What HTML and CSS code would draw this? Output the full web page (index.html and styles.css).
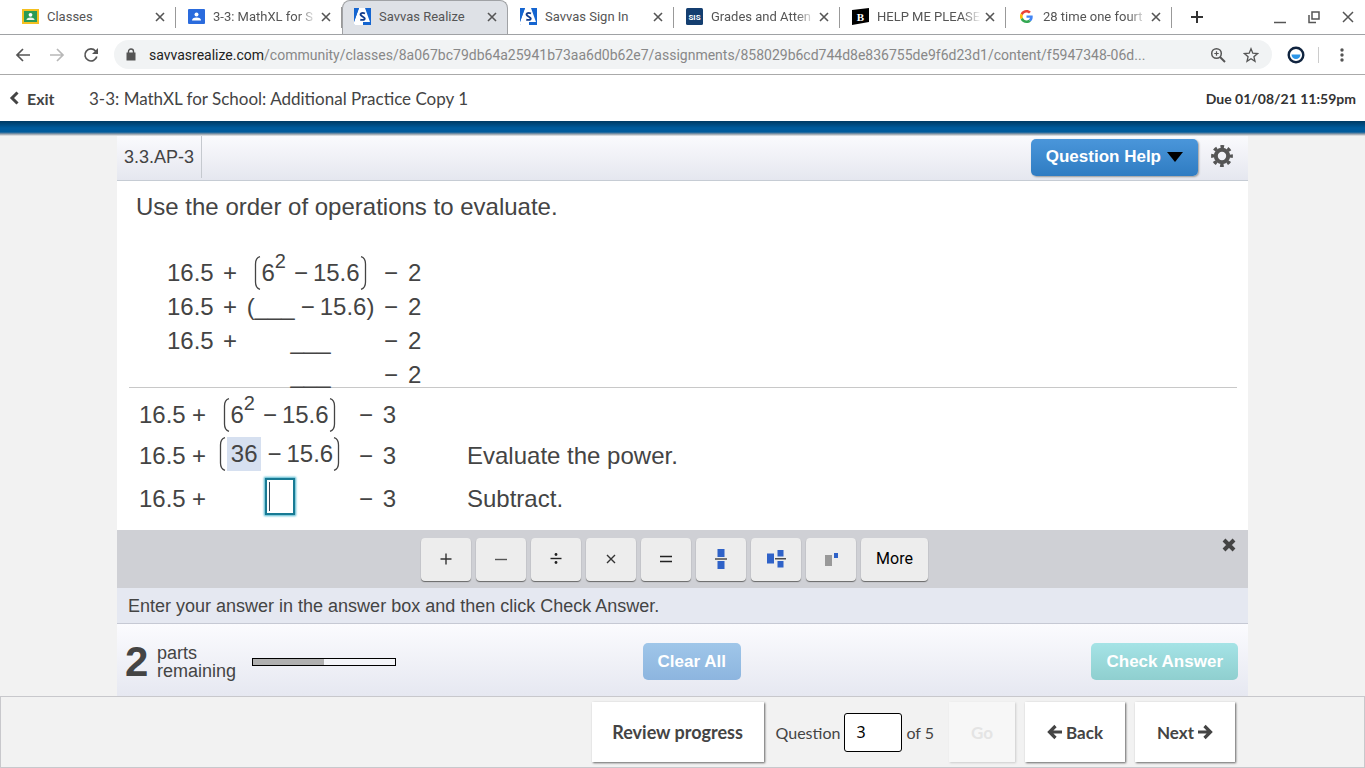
FILE: index.html
```html
<!DOCTYPE html>
<html lang="en">
<head>
<meta charset="utf-8">
<title>Savvas Realize</title>
<link rel="stylesheet" href="styles.css">
</head>
<body>
<svg class="defs" aria-hidden="true">
  <symbol id="x" viewBox="0 0 12 12"><path d="M2 2l8 8M10 2l-8 8" stroke="currentColor" stroke-width="1.6" fill="none"/></symbol>
  <symbol id="savvas" viewBox="0 0 17 17"><path d="M0 0h17v17H0z" fill="#1565d0"/><path d="M5 0h6l5 14H9v2H0v-2z" fill="#fff"/><path d="M0 14L5 0H0z" fill="#1565d0"/><path d="M0 17L5 3l1 11h3v3z" fill="#fff"/><path d="M11 5.500Q8.500 4.300 7 5.500T8.500 8.500 10.500 11.300 6.300 11.700" fill="none" stroke="#123c8c" stroke-width="1.900"/></symbol>
  <symbol id="lp" viewBox="0 0 7 34"><path d="M6 .7Q1.500 2 1.500 8v18Q1.500 32 6 33.300" stroke="currentColor" stroke-width="1.300" fill="none"/></symbol>
  <symbol id="rp" viewBox="0 0 7 34"><path d="M1 .7Q5.500 2 5.500 8v18Q5.500 32 1 33.300" stroke="currentColor" stroke-width="1.300" fill="none"/></symbol>
  <symbol id="arrow" viewBox="0 0 16 16"><path d="M15 8H4M8.500 2L2.500 8l6 6" stroke="currentColor" stroke-width="3.200" fill="none"/></symbol>
</svg>

<header class="browser">
  <div class="tabs">
    <div class="tab"><svg class="fav" viewBox="0 0 17 17"><path d="M0 1h17v15H0z" fill="#f4c020"/><path d="M2 3h13v11H2z" fill="#2b9a55"/><circle cx="8.500" cy="6.800" r="1.900" fill="#fff"/><path d="M4.500 12q0-2.500 4-2.500t4 2.500z" fill="#e8f5e9"/></svg><span class="tab-title">Classes</span><button class="tab-close" aria-label="Close tab"><svg><use href="#x"/></svg></button></div>
    <div class="tab"><svg class="fav" viewBox="0 0 17 17"><rect y="1" width="17" height="15" rx="1" fill="#2a6bdd"/><circle cx="8.500" cy="6.500" r="2" fill="#fff"/><path d="M4 12.500q0-3 4.500-3t4.500 3z" fill="#fff"/></svg><span class="tab-title fade">3-3: MathXL for S</span><button class="tab-close" aria-label="Close tab"><svg><use href="#x"/></svg></button></div>
    <div class="tab active"><svg class="fav"><use href="#savvas"/></svg><span class="tab-title">Savvas Realize</span><button class="tab-close" aria-label="Close tab"><svg><use href="#x"/></svg></button></div>
    <div class="tab"><svg class="fav"><use href="#savvas"/></svg><span class="tab-title">Savvas Sign In</span><button class="tab-close" aria-label="Close tab"><svg><use href="#x"/></svg></button></div>
    <div class="tab"><svg class="fav" viewBox="0 0 17 17"><rect width="17" height="17" rx="1.500" fill="#143e70"/><text x="8.500" y="11.500" text-anchor="middle" class="fav-sis">SIS</text></svg><span class="tab-title fade">Grades and Atten</span><button class="tab-close" aria-label="Close tab"><svg><use href="#x"/></svg></button></div>
    <div class="tab"><svg class="fav" viewBox="0 0 17 17"><path d="M0 2L17 0v14L0 17z" fill="#000"/><text x="8.500" y="12.500" text-anchor="middle" class="fav-b">B</text></svg><span class="tab-title fade">HELP ME PLEASE</span><button class="tab-close" aria-label="Close tab"><svg><use href="#x"/></svg></button></div>
    <div class="tab"><svg class="fav g" viewBox="0 0 48 48"><path fill="#EA4335" d="M24 9.500c3.540 0 6.710 1.220 9.210 3.600l6.850-6.850C35.900 2.380 30.470 0 24 0 14.620 0 6.510 5.380 2.560 13.220l7.980 6.190C12.430 13.720 17.740 9.500 24 9.500z"/><path fill="#4285F4" d="M46.980 24.550c0-1.570-.15-3.090-.38-4.550H24v9.020h12.940c-.58 2.960-2.260 5.480-4.780 7.180l7.730 6c4.510-4.180 7.090-10.360 7.090-17.650z"/><path fill="#FBBC05" d="M10.530 28.590a14.500 14.500 0 010-9.180l-7.980-6.190a24 24 0 000 21.560z"/><path fill="#34A853" d="M24 48c6.480 0 11.930-2.130 15.890-5.810l-7.730-6c-2.150 1.450-4.920 2.300-8.160 2.300-6.260 0-11.570-4.220-13.470-9.910l-7.980 6.190C6.510 42.620 14.620 48 24 48z"/></svg><span class="tab-title fade">28 time one fourt</span><button class="tab-close" aria-label="Close tab"><svg><use href="#x"/></svg></button></div>
    <button class="new-tab" aria-label="New tab"><svg viewBox="0 0 14 14"><path d="M7 1v12M1 7h12" stroke="#333" stroke-width="2"/></svg></button>
    <div class="window-buttons">
      <button aria-label="Minimize"><svg viewBox="0 0 14 14"><path d="M1 12.500h12" stroke="#555" stroke-width="1.500"/></svg></button>
      <button aria-label="Restore"><svg viewBox="0 0 14 14"><path d="M5 2h7v7H5zM2 5v7.500h7" fill="none" stroke="#555" stroke-width="1.500"/></svg></button>
      <button aria-label="Close window"><svg viewBox="0 0 14 14"><path d="M2 2l10 10M12 2L2 12" stroke="#555" stroke-width="1.500"/></svg></button>
    </div>
  </div>
  <div class="toolbar">
    <button class="tool" aria-label="Back"><svg viewBox="0 0 16 16"><path d="M15 8H2M8 2L2 8l6 6" fill="none" stroke="#555" stroke-width="1.700"/></svg></button>
    <button class="tool" aria-label="Forward"><svg viewBox="0 0 16 16"><path d="M1 8h13M8 2l6 6-6 6" fill="none" stroke="#b8b8b8" stroke-width="1.700"/></svg></button>
    <button class="tool" aria-label="Reload"><svg viewBox="0 0 16 16"><path d="M13.800 9.500A6 6 0 1112.500 4L14 5.500" fill="none" stroke="#555" stroke-width="1.700"/><path d="M15 1v6H9z" fill="#555"/></svg></button>
    <div class="omnibox">
      <svg class="lock" viewBox="0 0 10 13"><path d="M.5 4.500h9v8h-9z" fill="#555"/><path d="M2.500 5V3.500a2.500 2.500 0 015 0V5" fill="none" stroke="#555" stroke-width="1.400"/></svg>
      <div class="url"><span class="host">savvasrealize.com</span>/community/classes/8a067bc79db64a25941b73aa6d0b62e7/assignments/858029b6cd744d8e836755de9f6d23d1/content/f5947348-06d...</div>
      <button class="tool" aria-label="Zoom"><svg viewBox="0 0 16 16"><circle cx="6.500" cy="6.500" r="4.800" fill="none" stroke="#555" stroke-width="1.500"/><path d="M10 10l5 5" stroke="#555" stroke-width="2"/><path d="M6.500 4.300v4.400M4.300 6.500h4.400" stroke="#555" stroke-width="1.200"/></svg></button>
      <button class="tool" aria-label="Bookmark"><svg viewBox="0 0 16 16"><path d="M8 1.800l1.800 4.400 4.700.4-3.600 3.100 1.100 4.600L8 11.800l-4 2.500 1.100-4.600L1.500 6.600l4.700-.4z" fill="none" stroke="#555" stroke-width="1.300"/></svg></button>
    </div>
    <svg class="ext" viewBox="0 0 18 18"><circle cx="9" cy="9" r="7.300" fill="#fff" stroke="#10243f" stroke-width="2.400"/><path d="M4.500 8.500h9a4.500 4.500 0 01-9 0z" fill="#2b95e8"/></svg>
    <span class="divider"></span>
    <button class="tool menu" aria-label="Menu"><svg viewBox="0 0 16 16"><g fill="#555"><circle cx="8" cy="3" r="1.700"/><circle cx="8" cy="8" r="1.700"/><circle cx="8" cy="13" r="1.700"/></g></svg></button>
  </div>
</header>

<div class="assignment-bar">
  <a class="exit" href="#"><svg viewBox="0 0 10 14"><path d="M8.500 1.500L3 7l5.500 5.500" fill="none" stroke="currentColor" stroke-width="3"/></svg>Exit</a>
  <h1>3-3: MathXL for School: Additional Practice Copy 1</h1>
  <span class="due">Due 01/08/21 11:59pm</span>
</div>
<div class="blue-strip"></div>

<main class="player">
  <div class="q-head">
    <span class="q-id">3.3.AP-3</span>
    <button class="btn help">Question Help <svg viewBox="0 0 16 10"><path d="M0 0h16L8 10z"/></svg></button>
    <button class="gear" aria-label="Settings"><svg viewBox="0 0 22 22"><circle cx="11" cy="11" r="6.200" fill="none" stroke="#555" stroke-width="4"/><circle cx="11" cy="11" r="9.300" fill="none" stroke="#555" stroke-width="3.200" stroke-dasharray="3.650 3.650" stroke-dashoffset="1.825"/></svg></button>
  </div>

  <section class="question">
    <p class="prompt">Use the order of operations to evaluate.</p>
    <div class="example">
      <span>16.5</span><span>+</span><span class="group"><svg class="paren"><use href="#lp"/></svg><span>6<sup>2</sup></span><span class="minus">−</span>15.6<svg class="paren"><use href="#rp"/></svg></span><span>−</span><span>2</span>
      <span>16.5</span><span>+</span><span class="group"><span>(___</span><span class="minus tight">−</span>15.6)</span><span>−</span><span>2</span>
      <span>16.5</span><span>+</span><span class="group">___</span><span>−</span><span>2</span>
      <span></span><span></span><span class="group">___</span><span>−</span><span>2</span>
    </div>
    <div class="work">
      <span>16.5</span><span>+</span><span class="group"><svg class="paren"><use href="#lp"/></svg><span>6<sup>2</sup></span><span class="minus">−</span>15.6<svg class="paren"><use href="#rp"/></svg></span><span class="right">−</span><span class="right">3</span><span></span>
      <span>16.5</span><span>+</span><span class="group raised"><svg class="paren"><use href="#lp"/></svg><span class="filled">36</span><span class="minus tight">−</span>15.6<svg class="paren"><use href="#rp"/></svg></span><span class="right">−</span><span class="right">3</span><span class="note">Evaluate the power.</span>
      <span>16.5</span><span>+</span><span class="group"><input class="answer" type="text" aria-label="Answer"></span><span class="right">−</span><span class="right">3</span><span class="note">Subtract.</span>
    </div>
  </section>

  <div class="palette">
    <div class="keys">
      <button aria-label="Plus"><svg viewBox="0 0 20 20"><path d="M10 4.500v11M4.500 10h11" stroke="#333" stroke-width="1.400"/></svg></button>
      <button aria-label="Minus"><svg viewBox="0 0 20 20"><path d="M4 10.500h12" stroke="#555" stroke-width="1.400"/></svg></button>
      <button aria-label="Divide"><svg viewBox="0 0 20 20"><path d="M4.500 9.500h11" stroke="#222" stroke-width="1.400"/><circle cx="10" cy="5.500" r="1.400" fill="#222"/><circle cx="10" cy="13.500" r="1.400" fill="#222"/></svg></button>
      <button aria-label="Times"><svg viewBox="0 0 20 20"><path d="M6 6l8 8M14 6l-8 8" stroke="#333" stroke-width="1.400"/></svg></button>
      <button aria-label="Equals"><svg viewBox="0 0 20 20"><path d="M4 7.500h12M4 12.500h12" stroke="#222" stroke-width="1.400"/></svg></button>
      <button aria-label="Fraction"><svg viewBox="0 0 20 20"><path d="M6.500 0h7v8h-7zM6.500 12h7v8h-7z" fill="#2f62c8"/><path d="M4 10h12" stroke="#222" stroke-width="1.200"/></svg></button>
      <button aria-label="Mixed number"><svg viewBox="0 0 20 20"><path d="M1 4.500h7v10H1zM11.500 1h6v6.500h-6zM11.500 12h6v6.500h-6z" fill="#2f62c8"/><path d="M9 9.800h11" stroke="#222" stroke-width="1.200"/></svg></button>
      <button aria-label="Exponent"><svg viewBox="0 0 20 20"><path d="M4 6h7v11H4z" fill="#999"/><path d="M13 4h4v5h-4z" fill="#2f62c8"/></svg></button>
      <button class="more">More</button>
    </div>
    <button class="palette-close" aria-label="Close"><svg viewBox="0 0 14 14"><path d="M2 2l10 10M12 2L2 12" stroke="#444" stroke-width="4"/></svg></button>
  </div>
  <p class="hint">Enter your answer in the answer box and then click Check Answer.</p>
  <div class="status">
    <div class="parts"><strong>2</strong><span>parts<br>remaining</span><div class="progress"><div class="bar"></div></div></div>
    <button class="btn clear">Clear All</button>
    <button class="btn check">Check Answer</button>
  </div>
</main>

<nav class="pager">
  <button class="nav-btn review">Review progress</button>
  <label for="qn">Question</label>
  <input id="qn" type="text" value="3">
  <span class="of">of 5</span>
  <button class="nav-btn go" disabled>Go</button>
  <button class="nav-btn"><svg><use href="#arrow"/></svg>Back</button>
  <button class="nav-btn">Next<svg class="flip"><use href="#arrow"/></svg></button>
</nav>
</body>
</html>
```

FILE: styles.css
```css
* { box-sizing: border-box; }
body {
  margin: 0;
  min-height: 100vh;
  display: flex;
  flex-direction: column;
  background: #f2f2f2;
  color: #444;
  font-family: "Liberation Sans", Arial, sans-serif;
}
button { border: 0; padding: 0; background: none; color: inherit; font: inherit; display: flex; align-items: center; justify-content: center; }
svg { display: block; flex: none; }
.defs { position: absolute; width: 0; height: 0; }

/* Browser chrome */
.browser { background: #fff; font-family: Roboto, sans-serif; border-bottom: 1px solid #aaa; }
.tabs { display: flex; height: 35px; padding-left: 10px; border-bottom: 1px solid #a0a2a5; }
.tab { flex: 0 1 166px; min-width: 0; height: 34px; display: flex; align-items: center; padding: 0 10px 1px 12px; position: relative; font-size: 13px; color: #555; }
.tab::after { content: ""; position: absolute; right: 0; top: 7px; height: 21px; width: 1px; background: #999; }
.tab.active { background: #dee1e6; border: 1px solid #a0a2a5; border-bottom: 0; border-radius: 8px 8px 0 0; padding: 0 9px 2px 11px; }
.tab.active::after { display: none; }
.fav { width: 17px; height: 17px; }
.g { padding: 2px; }
.fav-sis { font: bold 8px Roboto, sans-serif; fill: #fff; }
.fav-b { font: bold 11px "Liberation Serif", serif; fill: #fff; }
.tab-title { flex: 1; min-width: 0; margin: 0 3px 0 8px; white-space: nowrap; }
.fade { -webkit-mask-image: linear-gradient(to right, #000 82%, transparent); mask-image: linear-gradient(to right, #000 82%, transparent); }
.tab-close svg { width: 12px; height: 12px; }
.new-tab { margin-left: 18px; }
.new-tab svg, .window-buttons svg { width: 14px; height: 14px; }
.window-buttons { display: flex; gap: 20px; margin-left: auto; padding-right: 10px; }
.toolbar { display: flex; align-items: center; height: 39px; padding: 0 15px; }
.tool svg { width: 16px; height: 16px; }
.toolbar > .tool { margin-right: 18px; }
.toolbar > .tool:nth-child(3) { margin-right: 15px; }
.toolbar > .menu { margin-right: 0; }
.omnibox { flex: 1; min-width: 0; height: 29px; margin-right: 15px; padding: 0 13px 0 12px; display: flex; align-items: center; gap: 17px; background: #f1f3f4; border-radius: 15px; }
.lock { width: 10px; height: 13px; }
.url { flex: 1; min-width: 0; margin-left: -4px; white-space: nowrap; font-size: 14px; color: #888; }
.host { color: #222; }
.ext { width: 18px; height: 18px; }
.divider { width: 1px; height: 16px; margin: 0 15px 0 13px; background: #ccc; }

/* Assignment header */
.assignment-bar { display: flex; align-items: center; height: 46px; padding: 0 9px; background: #fff; font-family: Lato, sans-serif; }
.exit { display: flex; align-items: center; gap: 8px; width: 80px; color: #444; font-weight: 700; font-size: 16px; text-decoration: none; }
.exit svg { width: 10px; height: 14px; }
.assignment-bar h1 { margin: 0; font-size: 17px; font-weight: 400; }
.due { margin-left: auto; color: #333; font-size: 14px; font-weight: 700; }
.blue-strip { height: 15px; background: linear-gradient(#003a63, #005b9c 7px, #005b9c 11px, #8d99a5 13px, #eee); }

/* Question player */
.player { flex: 1; margin: 0 117px; display: flex; flex-direction: column; background: #fff; }
.q-head { display: flex; align-items: center; height: 45px; padding: 0 15px 2px 0; background: linear-gradient(#fafafd, #e5e7ef); border-bottom: 1px solid #c6ccd4; }
.q-id { align-self: flex-start; height: 42px; padding: 0 7px; line-height: 42px; font-size: 18px; border-right: 1px solid #c5c9cf; }
.btn { height: 37px; border-radius: 5px; padding: 0 15px; color: #fff; font-weight: 700; font-size: 17px; white-space: nowrap; }
.help { margin-left: auto; gap: 6px; background: linear-gradient(#4a96da, #2f7cc2); box-shadow: 1px 1px 2px #999; }
.help svg { width: 16px; height: 10px; }
.gear { margin-left: 13px; padding-bottom: 2px; }
.gear svg { width: 22px; height: 22px; }

.question { flex: 1; font-size: 24px; }
.prompt { margin: 0; padding: 12px 19px 0; line-height: 28px; }
.group { display: flex; align-items: center; justify-content: center; }
.group sup { font-size: 20px; line-height: 0; vertical-align: 13px; }
.paren { width: 7px; height: 34px; }
.minus { margin: 0 5px 0 8px; }
.minus.tight { margin-left: 6px; }
.example { height: 167px; margin: 0 11px 0 12px; padding: 35px 0 0 38px; display: grid; grid-template-columns: 46px 14px 127px 14px 14px; grid-auto-rows: 34px; column-gap: 10px; align-items: center; line-height: 34px; border-bottom: 1px solid #c8c8c8; }
.work { display: grid; grid-template-columns: 46px 14px 133px 20px 16px 1fr; grid-template-rows: 54px 28px 58px; column-gap: 7px; align-items: center; padding-left: 22px; line-height: 28px; }
.right { text-align: right; }
.raised { margin-top: -4px; }
.filled { margin-left: 1px; padding: 3px 4px; background: #d6e0f0; }
.note { padding-left: 64px; }
.answer { width: 30px; height: 37px; margin-bottom: 6px; border: 2px solid #187a94; box-shadow: 0 0 2px 1px #4cb4cc; padding: 0 4px; font: inherit; outline: 0; background: linear-gradient(#345, #345) 2px 2px / 1px 29px no-repeat #fff; }

.palette { display: flex; align-items: flex-start; height: 58px; padding: 8px 12px; background: #cfd0d5; }
.keys { display: flex; gap: 5px; margin: 0 auto; padding-right: 2px; }
.keys button { width: 50px; height: 43px; padding-bottom: 2px; background: #ededed; border-radius: 4px; box-shadow: 0 1px 1px #666; }
.keys svg { width: 20px; height: 20px; }
.keys .more { width: 67px; color: #000; font: 16px Roboto, sans-serif; }
.palette-close svg { width: 14px; height: 14px; }
.hint { margin: 0; height: 36px; padding: 0 11px; line-height: 36px; font-size: 18px; background: #e5e8f1; border-bottom: 1px solid #c6c9d4; }
.status { display: grid; grid-template-columns: 46.5% auto 1fr; align-items: center; height: 72px; padding: 3px 10px 0 8px; background: linear-gradient(#fbfbfe, #e6e8f1); }
.parts { display: flex; align-items: center; font-size: 18px; line-height: 18px; }
.parts strong { width: 32px; font-size: 42px; line-height: 42px; }
.parts span { width: 95px; }
.progress { width: 144px; height: 8px; border: 1px solid #000; background: #f4f5f9; }
.bar { width: 50%; height: 100%; background: #b0b0b0; }
.clear { background: linear-gradient(#9fc6e9, #8db5df); }
.check { justify-self: end; background: linear-gradient(#a5e3e6, #8fcfcf); }

/* Bottom navigation */
.pager { display: flex; align-items: center; justify-content: flex-end; height: 72px; padding-right: 129px; border: 1px solid #c8c8cc; font: 16px Lato, sans-serif; }
.nav-btn { height: 60px; min-width: 100px; gap: 3px; margin-left: 10px; background: #fff; box-shadow: 1px 1px 2px #666; font-size: 17px; font-weight: 700; }
.nav-btn svg { width: 16px; height: 16px; }
.review { min-width: 172px; margin: 0 12px 0 0; font-size: 18px; }
.flip { transform: scaleX(-1); }
.pager input { width: 58px; height: 39px; margin: 0 4px; padding: 0 11px; border: 1px solid #000; border-radius: 3px; background: #fff; color: #000; font: 16px "Noto Sans", sans-serif; }
.nav-btn.go { min-width: 66px; margin-left: 15px; background: #f7f7f7; color: #e4e4e4; box-shadow: 1px 1px 2px #ccc; }
```
